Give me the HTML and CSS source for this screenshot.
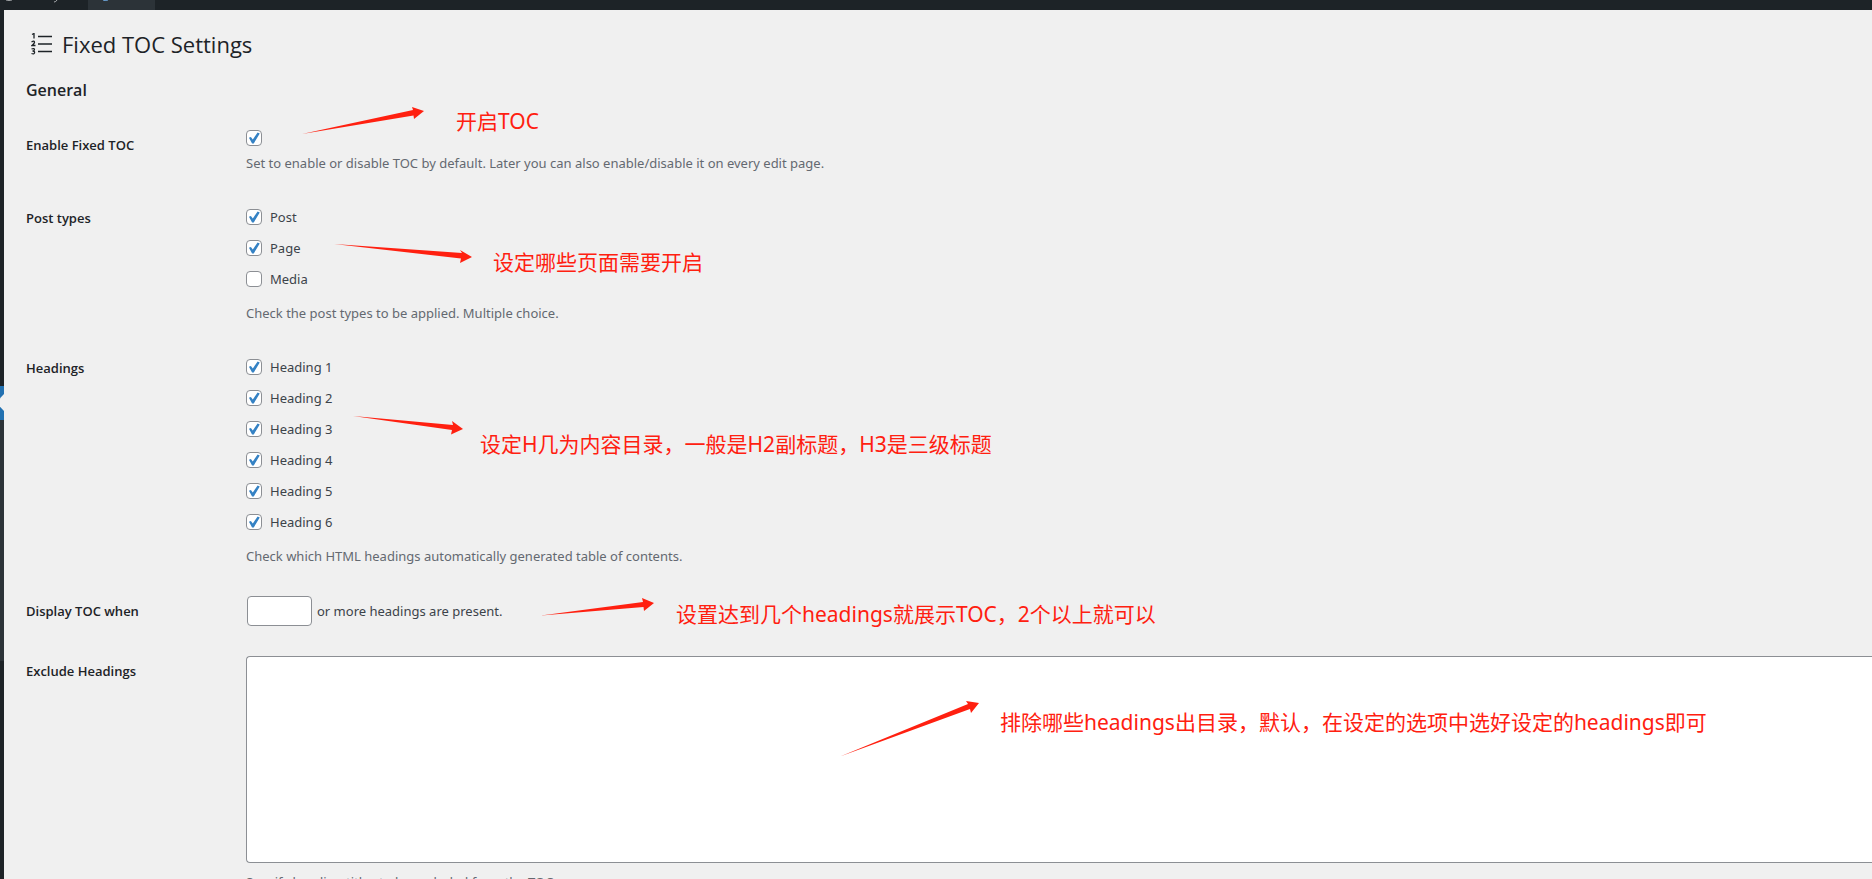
FILE: index.html
```
<!DOCTYPE html>
<html lang="en">
<head>
<meta charset="utf-8">
<title>Fixed TOC Settings</title>
<link rel="stylesheet" href="styles.css">
</head>
<body>
<div class="adminbar">
	<svg width="88" height="10" viewBox="0 0 88 10" aria-hidden="true">
		<path d="M6 0q3 1 6 0M57 0q-1 2-3 2" fill="none" stroke="#a7aaad"/>
	</svg>
	<div class="adminbar-item">
		<svg width="30" height="10" viewBox="0 0 30 10" aria-hidden="true">
			<path d="M15 0q2 1 5 0" fill="none" stroke="#72aee6"/>
		</svg>
	</div>
</div>
<div class="layout">
	<div class="menu">
		<div class="menu-top"></div>
		<div class="menu-current"></div>
		<div class="menu-sub"></div>
	</div>

	<main class="wrap">
		<h1>
			<svg width="22" height="22" viewBox="0 0 22 22" aria-hidden="true">
				<path d="M7 3.500h14M7 11h14M7 18.500h14" fill="none" stroke="#1d2327" stroke-width="1.500"/>
				<path d="M1 1.500l2-1v5M.500 9q3-2 3 .5Q3 11 1 12.500h3.500M.500 16q3-1 3 .5t-2 1.500q2.500 0 2 1.800t-3 .7" fill="none" stroke="#1d2327" stroke-width="1.300"/>
			</svg>
			Fixed TOC Settings
		</h1>
		<h2>General</h2>

		<form class="form-table">
			<div class="row">
				<label class="th" for="enable">Enable Fixed TOC</label>
				<div class="td">
					<input type="checkbox" id="enable" checked>
					<p class="description">Set to enable or disable TOC by default. Later you can also enable/disable it on every edit page.</p>
					<div class="note note-enable">
						<svg width="124" height="28" viewBox="0 0 124 28"><path d="M0 27L111 3 110 0 122 4 112 12 111.500 8.500z"/></svg>
						<span>开启TOC</span>
					</div>
				</div>
			</div>

			<div class="row">
				<div class="th">Post types</div>
				<div class="td td-list">
					<ul>
						<li><label><input type="checkbox" checked>Post</label></li>
						<li><label><input type="checkbox" checked>Page</label></li>
						<li><label><input type="checkbox">Media</label></li>
					</ul>
					<p class="description">Check the post types to be applied. Multiple choice.</p>
					<div class="note note-types">
						<svg width="140" height="22" viewBox="0 0 140 22"><path d="M1 1L129 10 127 7 139 14 127 20 128 15.500z"/></svg>
						<span>设定哪些页面需要开启</span>
					</div>
				</div>
			</div>

			<div class="row">
				<div class="th">Headings</div>
				<div class="td td-list">
					<ul>
						<li><label><input type="checkbox" checked>Heading 1</label></li>
						<li><label><input type="checkbox" checked>Heading 2</label></li>
						<li><label><input type="checkbox" checked>Heading 3</label></li>
						<li><label><input type="checkbox" checked>Heading 4</label></li>
						<li><label><input type="checkbox" checked>Heading 5</label></li>
						<li><label><input type="checkbox" checked>Heading 6</label></li>
					</ul>
					<p class="description">Check which HTML headings automatically generated table of contents.</p>
					<div class="note note-headings">
						<svg width="112" height="20" viewBox="0 0 112 20"><path d="M1 1L101 10 100 6 111 14 99 19.500 100 15z"/></svg>
						<span>设定H几为内容目录，一般是H2副标题，H3是三级标题</span>
					</div>
				</div>
			</div>

			<div class="row">
				<label class="th" for="count">Display TOC when</label>
				<div class="td">
					<div class="inline">
						<input type="text" id="count">
						<label for="count">or more headings are present.</label>
					</div>
					<div class="note note-count">
						<svg width="116" height="20" viewBox="0 0 116 20"><path d="M1 18.500L103 5 102 1 114 6 104 14 103.500 10z"/></svg>
						<span>设置达到几个headings就展示TOC，2个以上就可以</span>
					</div>
				</div>
			</div>

			<div class="row">
				<label class="th" for="exclude">Exclude Headings</label>
				<div class="td">
					<textarea id="exclude"></textarea>
					<p class="description">Specify heading titles to be excluded from the TOC.</p>
					<div class="note note-exclude">
						<svg width="140" height="58" viewBox="0 0 140 58"><path d="M0 56.500L128 4 126 1 139 3 131 13 130 9z"/></svg>
						<span>排除哪些headings出目录，默认，在设定的选项中选好设定的headings即可</span>
					</div>
				</div>
			</div>
		</form>
	</main>
</div>
</body>
</html>
```
FILE: styles.css
```
* {
	box-sizing: border-box;
	margin: 0;
	padding: 0;
}
html,
body {
	height: 100%;
}
body {
	display: flex;
	flex-direction: column;
	overflow: hidden;
	background: #f0f0f0;
	color: #3c434a;
	font: 13px/20px "Noto Sans", "Noto Sans CJK SC", sans-serif;
}
ul {
	list-style: none;
}
svg {
	display: block;
	flex: none;
}

/* admin frame */
.adminbar {
	display: flex;
	flex: none;
	height: 10px;
	background: #1d2327;
}
.adminbar-item {
	width: 67px;
	background: #2c3338;
}
.layout {
	display: flex;
	flex: 1;
	min-height: 0;
}
.menu {
	flex: none;
	width: 4px;
	background: #1d2327;
}
.menu-top {
	height: 376px;
}
.menu-current {
	height: 34px;
	padding-top: 8px;
	background: #2271b1;
}
.menu-current::after {
	content: "";
	display: block;
	height: 17px;
	background: #f0f0f0;
	clip-path: polygon(100% 0, 100% 100%, 0 75%, 0 25%);
}
.menu-sub {
	height: 241px;
	background: #2c3338;
}
.wrap {
	flex: 1;
	min-width: 0;
	overflow: hidden;
	padding: 19px 0 0 22px;
}

/* headings */
h1,
h2,
.th {
	color: #1d2327;
	font-family: "Open Sans", sans-serif;
}
h1 {
	display: flex;
	align-items: center;
	gap: 9px;
	height: 30px;
	padding-left: 5px;
	font-size: 22px;
	font-weight: 400;
}
h2 {
	margin: 19px 0 20px;
	font-size: 16px;
	font-weight: 600;
	line-height: 24px;
}

/* form */
.row {
	display: flex;
}
.th {
	flex: none;
	width: 220px;
	padding: 13px 10px 20px 0;
	font-weight: 600;
}
.td {
	position: relative;
	flex: 1;
	min-width: 0;
	padding: 8px 0 22px;
}
.td-list {
	padding-top: 12px;
}
li {
	height: 31px;
}
li label {
	display: inline-flex;
	align-items: center;
	gap: 8px;
	height: 20px;
}
.inline {
	display: flex;
	align-items: center;
	gap: 5px;
	padding-left: 1px;
}
.description {
	color: #646970;
}
ul + .description {
	margin-top: 3px;
}
input + .description {
	margin-top: 7px;
}
textarea + .description {
	margin-top: 9px;
}
input[type="checkbox"] {
	display: block;
	appearance: none;
	width: 16px;
	height: 16px;
	background: #fff;
	border: 1px solid #8c8f94;
	border-radius: 4px;
}
input[type="checkbox"]:checked::before {
	content: "";
	display: block;
	width: 12px;
	height: 12px;
	margin: 1px;
	background: #3582c4;
	clip-path: polygon(8% 48%, 24% 42%, 40% 62%, 80% 4%, 98% 12%, 48% 96%, 34% 96%);
}
input[type="text"] {
	width: 65px;
	height: 30px;
	padding: 0 8px;
	border: 1px solid #8c8f94;
	border-radius: 4px;
}
textarea {
	display: block;
	width: 100%;
	height: 207px;
	border: 1px solid #8c8f94;
	border-right: 0;
	border-radius: 4px 0 0 4px;
	resize: none;
}

/* red notes over the form */
.note {
	position: absolute;
	display: flex;
	gap: 20px;
	color: #ff2010;
	fill: #ff2010;
	font-size: 21px;
	line-height: 28px;
	white-space: nowrap;
	pointer-events: none;
}
.note-enable {
	top: -15px;
	left: 56px;
	gap: 30px;
}
.note-types {
	top: 48px;
	left: 87px;
}
.note-types span {
	padding-top: 5px;
}
.note-headings {
	top: 70px;
	left: 106px;
	gap: 16px;
}
.note-headings span {
	padding-top: 15px;
}
.note-count {
	top: 9px;
	left: 294px;
}
.note-count span {
	padding-top: 3px;
}
.note-exclude {
	top: 52px;
	left: 594px;
}
.note-exclude span {
	padding-top: 8px;
}
```
